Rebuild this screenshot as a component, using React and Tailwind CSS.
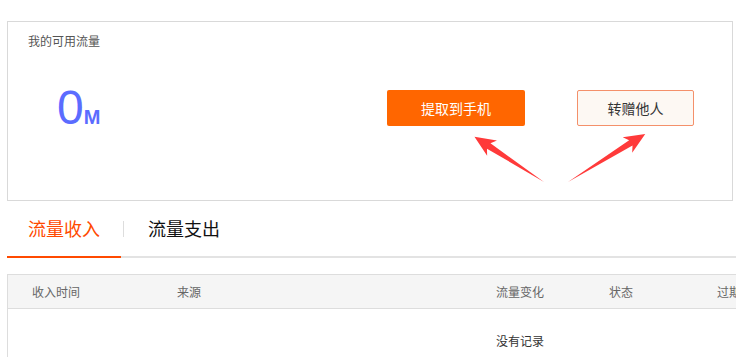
import React from "react";

const cjk = { fontFamily: '"Noto Sans CJK SC", "Microsoft YaHei", sans-serif' };

function Arrow({ x, y, angle, len }) {
  const L = len;
  const pts = [
    [0, 0],
    [L - 17, -3.2],
    [L - 21, -9],
    [L, 0],
    [L - 21, 9],
    [L - 17, 3.2],
  ]
    .map((p) => p.join(","))
    .join(" ");
  return (
    <polygon
      points={pts}
      fill="#ff3a3a"
      transform={`translate(${x} ${y}) rotate(${angle})`}
    />
  );
}

export default function App() {
  return (
    <div
      className="relative w-[736px] h-[357px] overflow-hidden bg-white pt-[21px]"
      style={cjk}
    >
      <div className="pl-[7px]">
        <div className="w-[726px] h-[180px] border border-[#d9d9d9] pl-[20px] pt-[10px]">
          <div className="text-[12px] leading-[18px] text-[#555]">我的可用流量</div>
          <div className="flex items-start">
            <div
              className="mt-[34px] ml-[29px] w-[330px] flex items-baseline text-[#5b6cff]"
              style={{ fontFamily: '"Liberation Sans", Arial, sans-serif' }}
            >
              <span className="text-[48px] leading-[48px]">0</span>
              <span className="text-[20px] leading-[20px] font-bold">M</span>
            </div>
            <div className="mt-[40px] w-[138px] h-[36px] rounded-[2px] bg-[#ff6600] text-white text-[14px] flex items-center justify-center">
              提取到手机
            </div>
            <div className="mt-[40px] ml-[52px] w-[117px] h-[36px] rounded-[2px] border border-[#f4906a] bg-[#fdf8f3] text-[#333] text-[14px] flex items-center justify-center">
              转赠他人
            </div>
          </div>
        </div>
      </div>

      <div className="pl-[7px]">
        <div className="flex items-center h-[55px] w-[729px]">
          <div className="w-[114px] h-full flex items-center justify-center text-[18px] text-[#ff4a00]">
            流量收入
          </div>
          <div className="w-px h-[16px] bg-[#dddddd] ml-[2px]" />
          <div className="ml-[24px] text-[18px] text-[#111]">流量支出</div>
        </div>
        <div className="flex h-[2px] bg-[#e3e3e3] w-[729px]">
          <div className="w-[114px] h-full bg-[#ff4a00]" />
        </div>
      </div>

      <div className="pl-[7px] mt-[16px]">
        <div className="w-[900px] border-l border-t border-[#dddddd]">
          <div className="grid grid-cols-[145px_319px_113px_108px_200px] h-[34px] items-center bg-[#f5f5f5] border-b border-[#dddddd] text-[12px] text-[#666]">
            <div className="pl-[24px]">收入时间</div>
            <div className="pl-[24px]">来源</div>
            <div className="pl-[24px]">流量变化</div>
            <div className="pl-[24px]">状态</div>
            <div className="pl-[24px]">过期时间</div>
          </div>
          <div className="h-[60px] pl-[488px] pt-[23px] text-[12px] leading-[18px] text-[#333]">
            没有记录
          </div>
        </div>
      </div>

      <svg
        className="absolute left-0 top-0 pointer-events-none"
        width="736"
        height="357"
        viewBox="0 0 736 357"
      >
        <Arrow x={544} y={182} angle={213.1} len={83} />
        <Arrow x={568} y={182} angle={-31.9} len={91} />
      </svg>
    </div>
  );
}
